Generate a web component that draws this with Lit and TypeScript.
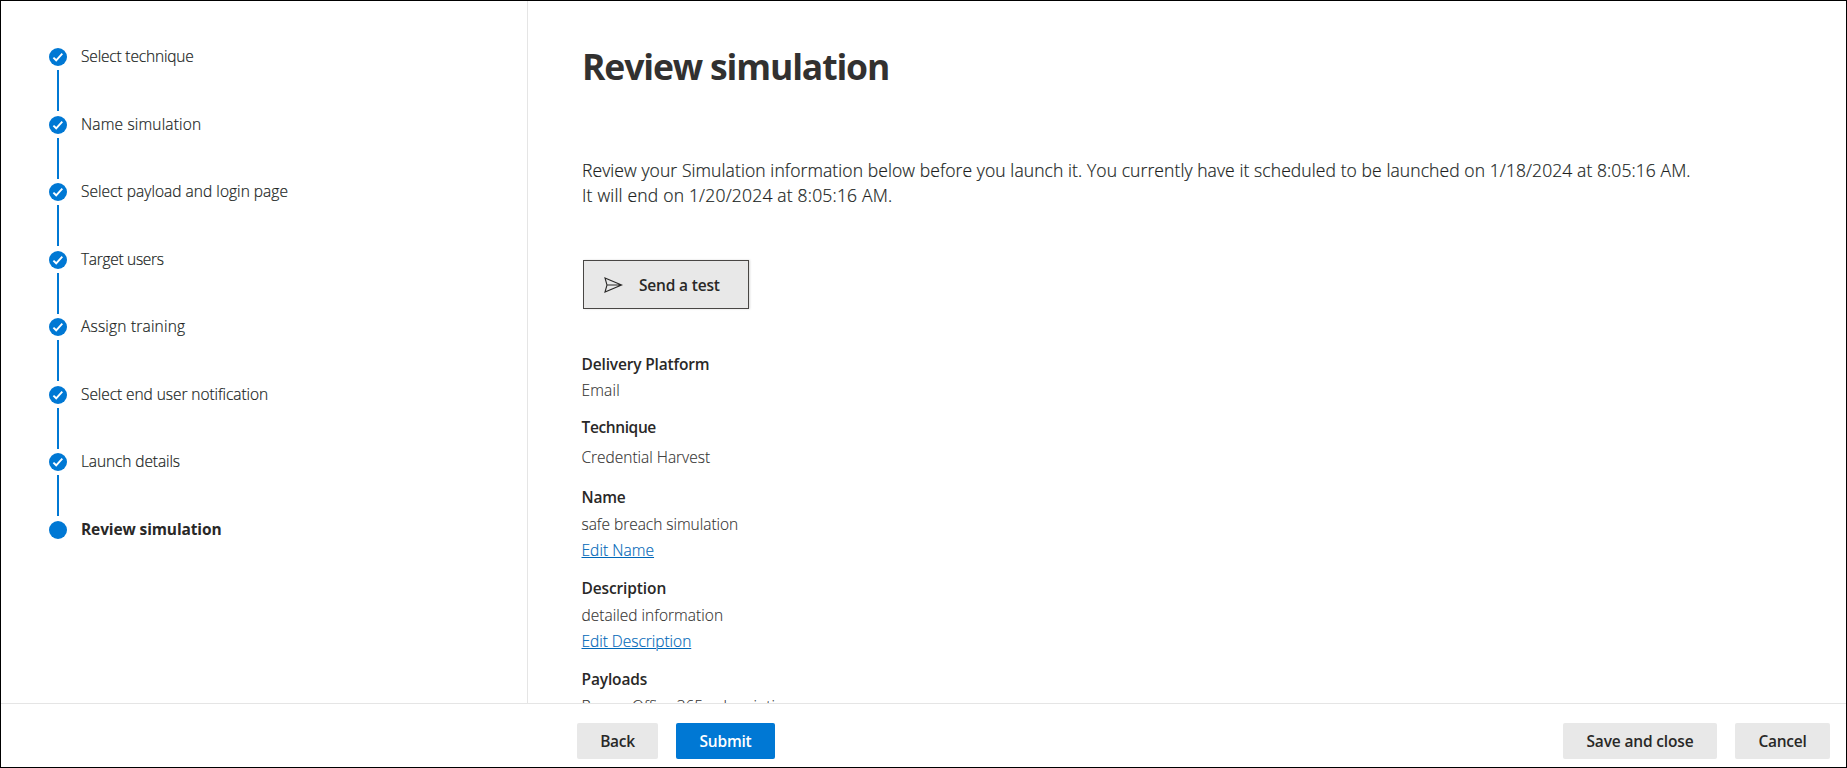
import { LitElement, html, css, svg, nothing } from "lit";
import { customElement, property } from "lit/decorators.js";
import { styleMap } from "lit/directives/style-map.js";

interface Label {
  text: string;
  track?: number;
}

interface Step extends Label {
  current?: boolean;
}

interface Field {
  label: Label;
  value: Label;
  link?: Label;
  variant?: string;
}

const STEPS: Step[] = [
  { text: "Select technique", track: -0.17 },
  { text: "Name simulation", track: 0.16 },
  { text: "Select payload and login page", track: 0.03 },
  { text: "Target users", track: -0.3 },
  { text: "Assign training", track: 0.2 },
  { text: "Select end user notification", track: -0.07 },
  { text: "Launch details", track: -0.1 },
  { text: "Review simulation", track: -0.12, current: true },
];

const FIELDS: Field[] = [
  {
    label: { text: "Delivery Platform", track: -0.16 },
    value: { text: "Email", track: 0.18 },
    variant: "first",
  },
  {
    label: { text: "Technique", track: -0.38 },
    value: { text: "Credential Harvest", track: -0.02 },
    variant: "wide",
  },
  {
    label: { text: "Name", track: -0.2 },
    value: { text: "safe breach simulation", track: -0.03 },
    link: { text: "Edit Name", track: 0.05 },
  },
  {
    label: { text: "Description", track: -0.12 },
    value: { text: "detailed information", track: 0.02 },
    link: { text: "Edit Description", track: -0.03 },
  },
  {
    label: { text: "Payloads", track: -0.13 },
    value: { text: "Renew Office 365 subscription" },
  },
];

const tracked = (l: Label) =>
  html`<span style=${styleMap({ letterSpacing: `${l.track ?? 0}px` })}>${l.text}</span>`;

@customElement("wizard-steps")
class WizardSteps extends LitElement {
  @property({ attribute: false }) steps: Step[] = [];

  static styles = css`
    :host {
      display: block;
    }
    .steps {
      list-style: none;
      margin: 0;
      padding: 47px 0 0 48px;
    }
    .step {
      display: flex;
      gap: 14px;
      height: 67.57px;
    }
    .rail {
      display: flex;
      flex-direction: column;
      align-items: center;
      width: 18px;
    }
    .dot {
      display: block;
      width: 18px;
      height: 18px;
      flex: none;
    }
    .line {
      width: 2px;
      height: 41px;
      margin-top: 4px;
      background: #0078d4;
    }
    .name {
      font-size: 15.5px;
      line-height: 17px;
      font-weight: 300;
      color: #201f1e;
      -webkit-text-stroke: 0.2px currentColor;
      white-space: nowrap;
    }
    .current {
      font-weight: 700;
      color: #292827;
      -webkit-text-stroke: 0;
    }
  `;

  render() {
    return html`<ol class="steps">
      ${this.steps.map(
        (s) => html`<li class="step">
          <div class="rail">
            <svg class="dot" viewBox="0 0 18 18">
              <circle cx="9" cy="9" r="9" fill="#0078d4" />
              ${s.current
                ? nothing
                : svg`<path d="M4.4 9.6 L7.2 12.3 L13.3 5.7" fill="none" stroke="#fff" stroke-width="1.9" />`}
            </svg>
            ${s.current ? nothing : html`<div class="line"></div>`}
          </div>
          <div class="name ${s.current ? "current" : ""}">${tracked(s)}</div>
        </li>`,
      )}
    </ol>`;
  }
}

@customElement("app-root")
class AppRoot extends LitElement {
  static styles = css`
    :host {
      display: block;
      font-family: "Open Sans", "Noto Sans", sans-serif;
      color: #323130;
    }
    .frame {
      box-sizing: border-box;
      height: 768px;
      border: 1px solid #000;
      background: #fff;
      display: grid;
      grid-template-rows: 702px 1fr;
    }
    .body {
      display: grid;
      grid-template-columns: 527px 1fr;
      min-height: 0;
    }
    .side {
      box-sizing: border-box;
      border-right: 1px solid #e5e5e5;
    }
    .content {
      overflow: hidden;
      padding: 41px 0 0 54px;
    }
    h1 {
      margin: 0;
      font-size: 35.5px;
      line-height: 49px;
      font-weight: 700;
      letter-spacing: -1.14px;
    }
    .intro {
      margin: 67px 0 0;
      font-size: 17.5px;
      line-height: 25px;
      font-weight: 300;
      color: #201f1e;
      -webkit-text-stroke: 0.2px currentColor;
      white-space: nowrap;
    }
    .test {
      box-sizing: border-box;
      display: flex;
      align-items: center;
      width: 166px;
      height: 49px;
      margin: 52px 0 0 1px;
      padding: 0 0 0 20px;
      gap: 16px;
      border: 1px solid #484644;
      background: #e8e8e8;
      box-shadow: 1px 0 2px rgba(0, 0, 0, 0.15);
      font: inherit;
      font-size: 15.5px;
      font-weight: 600;
      line-height: 20px;
      color: #292827;
    }
    .test svg {
      width: 19px;
      height: 16px;
      flex: none;
    }
    .fields {
      padding-top: 45px;
      font-size: 15.5px;
      line-height: 20px;
      white-space: nowrap;
      margin-left: -0.5px;
    }
    .field {
      display: grid;
      row-gap: 7px;
      margin-bottom: 18px;
      justify-items: start;
    }
    .first {
      row-gap: 6px;
      margin-bottom: 17px;
    }
    .wide {
      row-gap: 10px;
      margin-bottom: 20px;
    }
    .label {
      font-weight: 600;
      color: #292827;
    }
    .value {
      font-weight: 300;
      color: #323130;
      -webkit-text-stroke: 0.12px currentColor;
    }
    .link {
      margin-top: -1px;
      font-weight: 300;
      color: #0067b8;
      -webkit-text-stroke: 0.15px currentColor;
      text-decoration: underline;
      text-decoration-thickness: 1px;
      text-underline-offset: 1px;
    }
    .footer {
      display: flex;
      align-items: flex-start;
      border-top: 1px solid #e5e5e5;
      padding: 19px 16px 0 576px;
    }
    .btn {
      box-sizing: border-box;
      height: 36px;
      padding: 0;
      border: 0;
      border-radius: 2px;
      background: #e8e8e8;
      color: #292827;
      font: inherit;
      font-size: 15.5px;
      font-weight: 600;
      line-height: 36px;
      text-align: center;
    }
    .back {
      width: 81px;
      margin-right: 18px;
    }
    .submit {
      width: 99px;
      background: #0078d4;
      color: #fff;
    }
    .save {
      width: 154px;
      margin: 0 18px 0 auto;
    }
    .cancel {
      width: 95px;
    }
  `;

  render() {
    return html`<div class="frame">
      <div class="body">
        <nav class="side"><wizard-steps .steps=${STEPS}></wizard-steps></nav>
        <main class="content">
          <h1>Review simulation</h1>
          <p class="intro">
            ${tracked({
              text: "Review your Simulation information below before you launch it. You currently have it scheduled to be launched on 1/18/2024 at 8:05:16 AM.",
              track: 0.09,
            })}<br />${tracked({ text: "It will end on 1/20/2024 at 8:05:16 AM.", track: 0.2 })}
          </p>
          <button class="test">
            <svg viewBox="0 0 19 16" fill="none" stroke="#292827" stroke-width="1.1">
              <path d="M1 1 L17.6 8 L1 15 L3 8 Z M3 8 H17.6" />
            </svg>
            ${tracked({ text: "Send a test", track: -0.18 })}
          </button>
          <section class="fields">
            ${FIELDS.map(
              (f) => html`<div class="field ${f.variant ?? ""}">
                <div class="label">${tracked(f.label)}</div>
                <div class="value">${tracked(f.value)}</div>
                ${f.link ? html`<a class="link">${tracked(f.link)}</a>` : nothing}
              </div>`,
            )}
          </section>
        </main>
      </div>
      <footer class="footer">
        <button class="btn back">${tracked({ text: "Back", track: -0.3 })}</button>
        <button class="btn submit">${tracked({ text: "Submit", track: -0.2 })}</button>
        <button class="btn save">${tracked({ text: "Save and close", track: -0.16 })}</button>
        <button class="btn cancel">${tracked({ text: "Cancel", track: -0.3 })}</button>
      </footer>
    </div>`;
  }
}
